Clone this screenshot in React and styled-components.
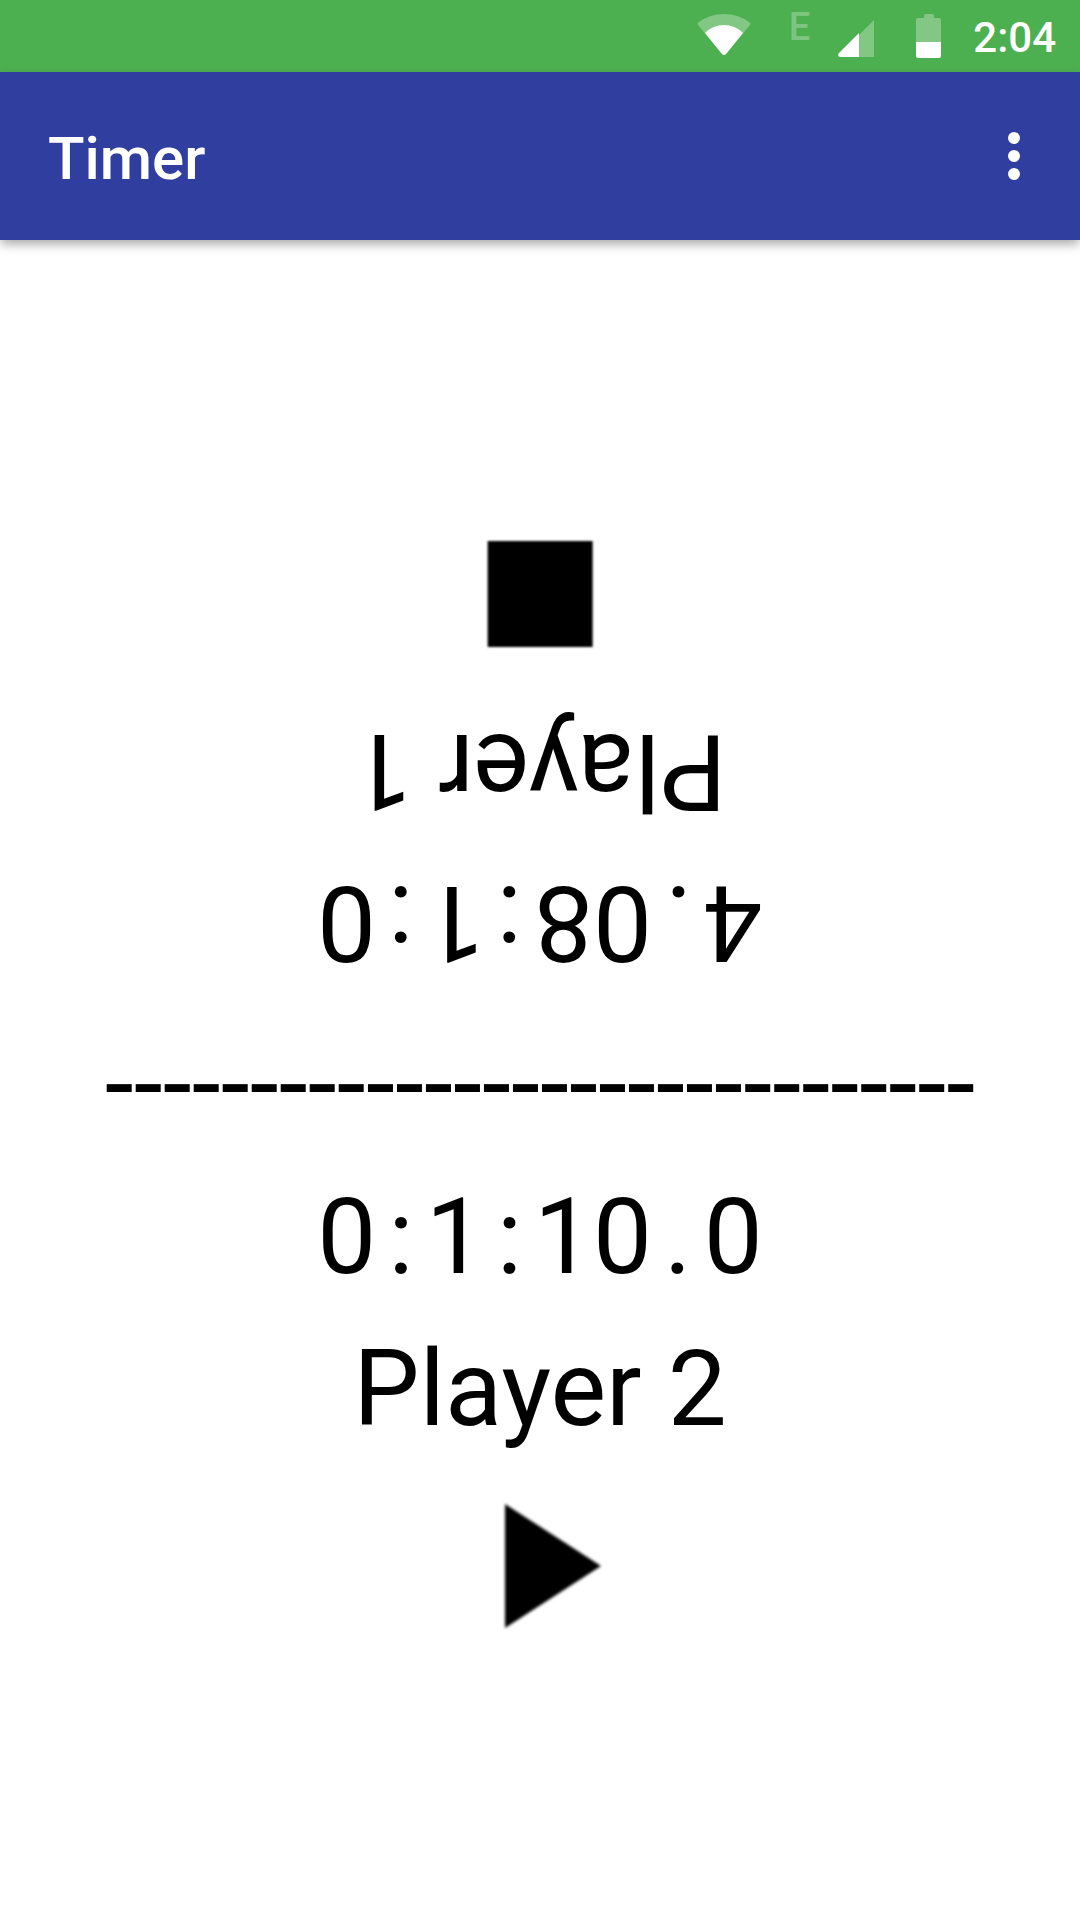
import React from "react";
import styled, { createGlobalStyle } from "styled-components";

const GlobalStyle = createGlobalStyle`
  *, *::before, *::after { box-sizing: border-box; }
  html, body, #root { height: 100%; }
  body {
    margin: 0;
    background: #fff;
    font-family: Roboto, "Liberation Sans", sans-serif;
  }
`;

const Screen = styled.div`
  display: flex;
  flex-direction: column;
  min-height: 100%;
  background: #fff;
  color: #000;
`;

const StatusBar = styled.div`
  display: flex;
  align-items: flex-start;
  justify-content: flex-end;
  height: 72px;
  padding: 13px 24px 0 24px;
  background: #4caf50;
  color: #fff;
`;

const StatusIcon = styled.svg`
  display: block;
  width: ${(p) => p.$width}px;
  height: 48px;
  margin-right: ${(p) => p.$after}px;
  fill: #fff;
`;

const NetworkType = styled.span`
  margin-right: 28px;
  font-size: 38px;
  line-height: 28px;
  font-weight: 500;
  color: rgba(255, 255, 255, 0.3);
`;

const Clock = styled.time`
  font-size: 42px;
  line-height: 50px;
  font-weight: 500;
`;

const AppBar = styled.header`
  display: flex;
  align-items: center;
  justify-content: space-between;
  height: 168px;
  padding: 0 24px 0 48px;
  background: #303f9f;
  color: #fff;
  box-shadow: 0 5px 10px -1px rgba(0, 0, 0, 0.35);
`;

const Title = styled.h1`
  margin: 0;
  padding-top: 6px;
  font-size: 60px;
  line-height: 72px;
  font-weight: 500;
`;

const IconButton = styled.button`
  display: flex;
  align-items: center;
  justify-content: center;
  width: ${(p) => p.$width}px;
  height: ${(p) => p.$height}px;
  padding: 0;
  border: 0;
  background: transparent;
  color: inherit;
  cursor: pointer;

  svg {
    display: block;
    fill: currentColor;
  }
`;

const Board = styled.main`
  flex: 1;
  display: flex;
  flex-direction: column;
  align-items: center;
  justify-content: center;
  gap: 29px;
  font-size: 105px;
  line-height: 124px;
`;

const PlayerSide = styled.section`
  display: flex;
  flex-direction: column;
  align-items: center;
  gap: 28px;
  transform: ${(p) => (p.$flipped ? "rotate(180deg)" : "none")};
`;

const TimeRow = styled.div`
  display: flex;
  gap: 12px;
`;

const PlayerName = styled.h2`
  margin: 0;
  font-size: inherit;
  font-weight: 400;
`;

const Divider = styled.div`
  padding-top: 10px;
  white-space: nowrap;
`;

function StopIcon() {
  return (
    <svg width="144" height="144" viewBox="0 0 144 144" aria-hidden="true">
      <filter id="stop-edge">
        <feGaussianBlur stdDeviation="1" />
      </filter>
      <rect x="19" y="19" width="105" height="106" filter="url(#stop-edge)" />
    </svg>
  );
}

function PlayIcon() {
  return (
    <svg width="144" height="144" viewBox="0 0 144 144" aria-hidden="true">
      <filter id="play-edge">
        <feGaussianBlur stdDeviation="1.5" />
      </filter>
      <path d="M37 10 L133 72 L37 134 Z" filter="url(#play-edge)" />
    </svg>
  );
}

function Player({ name, time, running = false, flipped = false }) {
  return (
    <PlayerSide $flipped={flipped}>
      <TimeRow>
        {time.map((part, i) => (
          <span key={i}>{part}</span>
        ))}
      </TimeRow>
      <PlayerName>{name}</PlayerName>
      <IconButton
        $width={172}
        $height={172}
        aria-label={`${running ? "Stop" : "Start"} ${name}`}
      >
        {running ? <StopIcon /> : <PlayIcon />}
      </IconButton>
    </PlayerSide>
  );
}

export default function App() {
  return (
    <Screen>
      <GlobalStyle />
      <StatusBar>
        <StatusIcon $width={54} $after={37} viewBox="0 0 54 48" aria-hidden="true">
          <path
            opacity="0.3"
            d="M26 42 Q25 42 24 41 L0 12 Q-1 10 1 9 Q12 1 26 1 Q40 1 51 9 Q53 10 52 12 L28 41 Q27 42 26 42 Z"
          />
          <path d="M26 42 Q25 42 24 41 L7 20 Q15 12 26 12 Q37 12 45 20 L28 41 Q27 42 26 42 Z" />
        </StatusIcon>
        <NetworkType>E</NetworkType>
        <StatusIcon $width={38} $after={40} viewBox="0 0 38 48" aria-hidden="true">
          <path opacity="0.3" d="M21 22 L36 7 V44 H21 Z" />
          <path d="M21 20 V44 H2 Q-1 43 1 40 Z" />
        </StatusIcon>
        <StatusIcon $width={26} $after={31} viewBox="0 0 26 48" aria-hidden="true">
          <path
            opacity="0.3"
            d="M0 29 V7 Q0 5 2 5 H8 V3 Q8 1 10 1 H16 Q18 1 18 3 V5 H23 Q25 5 25 7 V29 Z"
          />
          <path d="M0 29 H25 V43 Q25 45 23 45 H2 Q0 45 0 43 Z" />
        </StatusIcon>
        <Clock>2:04</Clock>
      </StatusBar>
      <AppBar>
        <Title>Timer</Title>
        <IconButton $width={84} $height={96} aria-label="More options">
          <svg width="12" height="48" viewBox="0 0 12 48" aria-hidden="true">
            <circle cx="6" cy="6" r="6" />
            <circle cx="6" cy="24" r="6" />
            <circle cx="6" cy="42" r="6" />
          </svg>
        </IconButton>
      </AppBar>
      <Board>
        <Player name="Player 1" time={["4", ".", "08", ":", "1", ":", "0"]} running flipped />
        <Divider role="separator">{"-".repeat(30)}</Divider>
        <Player name="Player 2" time={["0", ":", "1", ":", "10", ".", "0"]} />
      </Board>
    </Screen>
  );
}
